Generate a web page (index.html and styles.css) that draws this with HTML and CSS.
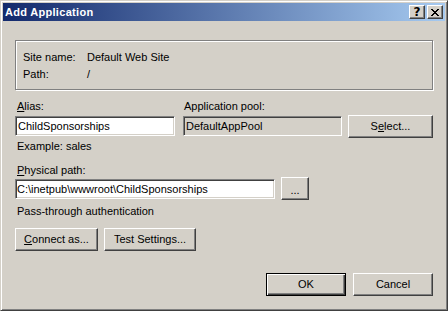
FILE: index.html
```html
<!DOCTYPE html>
<html>
<head>
<meta charset="utf-8">
<title>Add Application</title>
<link rel="stylesheet" href="styles.css">
</head>
<body>
<div class="window">
  <div class="titlebar">
    <span class="title">Add Application</span>
    <div class="tbtns">
      <div class="tbtn help">?</div>
      <div class="tbtn close">
        <svg width="8" height="7" viewBox="0 0 8 7"><path d="M0 0h2v1h-2zM6 0h2v1h-2zM1 1h2v1h-2zM5 1h2v1h-2zM2 2h4v1h-4zM3 3h2v1h-2zM2 4h4v1h-4zM1 5h2v1h-2zM5 5h2v1h-2zM0 6h2v1h-2zM6 6h2v1h-2z" fill="#000"/></svg>
      </div>
    </div>
  </div>
  <div class="content">
    <div class="group">
      <div class="grow"><span class="key">Site name:</span><span>Default Web Site</span></div>
      <div class="grow second"><span class="key">Path:</span><span>/</span></div>
    </div>

    <div class="row-alias">
      <div class="col col-alias">
        <div class="label"><u>A</u>lias:</div>
        <div class="input">ChildSponsorships</div>
        <div class="label hint">Example: sales</div>
      </div>
      <div class="col col-pool">
        <div class="label pool-label">Application pool:</div>
        <div class="input disabled">DefaultAppPool</div>
      </div>
      <div class="btn btn-select">S<u>e</u>lect...</div>
    </div>

    <div class="label phys-label"><u>P</u>hysical path:</div>
    <div class="row-path">
      <div class="input input-path">C:\inetpub\wwwroot\ChildSponsorships</div>
      <div class="btn btn-browse">...</div>
    </div>
    <div class="label pass">Pass-through authentication</div>

    <div class="row-connect">
      <div class="btn btn-connect"><u>C</u>onnect as...</div>
      <div class="btn btn-test">Test Settings...</div>
    </div>

    <div class="row-actions">
      <div class="btn btn-ok default">OK</div>
      <div class="btn btn-cancel">Cancel</div>
    </div>
  </div>
</div>
</body>
</html>
```

FILE: styles.css
```css
* { box-sizing: border-box; }
html, body {
  margin: 0;
  padding: 0;
  background: #d4d0c8;
}
body {
  font-family: "Liberation Sans", Arial, sans-serif;
  font-size: 11px;
  color: #000;
}
.window {
  width: 448px;
  height: 311px;
  background: #d4d0c8;
  border: 1px solid;
  border-color: #d4d0c8 #404040 #404040 #d4d0c8;
  box-shadow: inset 1px 1px #fff, inset -1px -1px #808080;
  padding: 2px;
  display: flex;
  flex-direction: column;
}
.titlebar {
  height: 18px;
  background: linear-gradient(to right, #12296c, #a6caf0);
  display: flex;
  align-items: center;
  justify-content: space-between;
  padding: 0 2px 0 2px;
}
.title {
  color: #fff;
  font-weight: bold;
  font-size: 11px;
  line-height: 13px;
  letter-spacing: 0.3px;
}
.tbtns {
  display: flex;
  gap: 2px;
}
.tbtn {
  width: 16px;
  height: 14px;
  background: #d4d0c8;
  border: 1px solid;
  border-color: #fff #404040 #404040 #fff;
  box-shadow: inset -1px -1px #808080;
  display: flex;
  align-items: center;
  justify-content: center;
}
.tbtn.help {
  font-weight: bold;
  font-size: 12px;
  line-height: 12px;
  font-family: "DejaVu Sans", sans-serif;
}
.content {
  flex: 1;
  padding: 19px 12px 0 12px;
  display: flex;
  flex-direction: column;
}
.group {
  height: 50px;
  border: 1px solid #808080;
  box-shadow: inset 1px 1px #fff, 1px 1px #fff;
  padding: 10px 0 0 7px;
  display: flex;
  flex-direction: column;
}
.grow {
  display: flex;
  line-height: 13px;
}
.grow.second { margin-top: 4px; }
.key { width: 64px; }

.label { line-height: 13px; padding-left: 2px; }

.row-alias {
  margin-top: 10px;
  display: flex;
  align-items: flex-start;
}
.col { display: flex; flex-direction: column; }
.col-alias { width: 160px; }
.col-pool { width: 159px; margin-left: 8px; }
.pool-label { padding-left: 1px; }
.hint { margin-top: 4px; }

.input {
  margin-top: 3px;
  height: 20px;
  background: #fff;
  border: 1px solid;
  border-color: #808080 #fff #fff #808080;
  box-shadow: inset 1px 1px #404040, inset -1px -1px #d4d0c8;
  padding: 0 2px;
  line-height: 18px;
  white-space: nowrap;
  overflow: hidden;
}
.input.disabled { background: #d4d0c8; }

.btn {
  height: 23px;
  background: #d4d0c8;
  border: 1px solid;
  border-color: #fff #404040 #404040 #fff;
  box-shadow: inset -1px -1px #808080;
  display: flex;
  align-items: center;
  justify-content: center;
  line-height: 13px;
  white-space: nowrap;
}
.btn u { text-underline-offset: 1px; }
.btn-select { width: 85px; margin-left: 6px; margin-top: 15px; }

.phys-label { margin-top: 11px; }
.row-path {
  display: flex;
  align-items: flex-start;
}
.input-path { width: 260px; margin-top: 2px; padding-left: 1px; }
.btn-browse { width: 28px; margin-left: 6px; padding-top: 3px; }

.pass { margin-top: 5px; }

.row-connect {
  margin-top: 10px;
  display: flex;
  gap: 6px;
}
.btn-connect { width: 83px; }
.btn-test { width: 92px; }

.row-actions {
  margin-top: 22px;
  display: flex;
  justify-content: flex-end;
  gap: 7px;
}
.btn-ok, .btn-cancel { width: 80px; }
.btn.default {
  border: 1px solid #000;
  box-shadow: inset 1px 1px #fff, inset -1px -1px #404040, inset -2px -2px #808080;
}
```
